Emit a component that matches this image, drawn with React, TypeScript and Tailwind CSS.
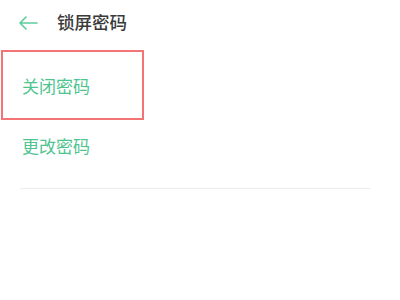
export default function App() {
  return (
    <div
      className="relative w-[400px] h-[300px] bg-white overflow-hidden"
      style={{ fontFamily: '"Noto Sans CJK SC", "Noto Sans", sans-serif' }}
    >
      <div className="flex items-center h-[44px] pl-[18px]">
        <svg width="20" height="14" viewBox="0 0 20 14" fill="none" className="mt-[1px]">
          <path d="M19 7H2M8 1L2 7l6 6" stroke="#5ccc9c" strokeWidth="1.6" strokeLinecap="round" strokeLinejoin="round" />
        </svg>
        <span className="ml-[19px] text-[17.5px] font-medium text-[#3a3a3a] leading-none">锁屏密码</span>
      </div>
      <div className="ml-[1px] mt-[6px] w-[143px] h-[70px] border-2 border-[#f27474] flex items-center pl-[19px]">
        <span className="text-[17px] text-[#4fc48f] leading-none">关闭密码</span>
      </div>
      <div className="h-[50px] flex items-center pl-[22px]">
        <span className="text-[17px] text-[#4fc48f] leading-none">更改密码</span>
      </div>
      <div className="mx-[20px] mt-[18px] w-[350px] h-px bg-[#ececec]" />
    </div>
  );
}
